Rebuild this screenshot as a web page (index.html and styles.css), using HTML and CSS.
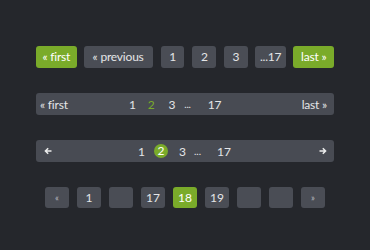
FILE: index.html
```html
<!DOCTYPE html>
<html lang="en">
<head>
    <meta charset="UTF-8">
    <meta name="viewport" content="width=device-width, initial-scale=1.0">
    <title>Pagination</title>
    <link rel="stylesheet" href="styles.css">
</head>
<body>
    <div class="container">
        <!-- Buttons pagination -->
        <nav class="pager pager-buttons">
            <a href="#" class="btn btn-green btn-first">&laquo; first</a>
            <a href="#" class="btn btn-prev">&laquo; previous</a>
            <a href="#" class="btn btn-num">1</a>
            <a href="#" class="btn btn-num">2</a>
            <a href="#" class="btn btn-num">3</a>
            <a href="#" class="btn btn-dots">...17</a>
            <a href="#" class="btn btn-green btn-last">last &raquo;</a>
        </nav>

        <!-- Bar pagination -->
        <nav class="bar bar-text">
            <a href="#" class="bar-start">&laquo; first</a>
            <div class="bar-pages">
                <a href="#">1</a>
                <a href="#" class="current-text">2</a>
                <a href="#" class="third">3</a>
                <span class="dots">...</span>
                <a href="#" class="far">17</a>
            </div>
            <a href="#" class="bar-end">last &raquo;</a>
        </nav>

        <!-- Bar with arrows -->
        <nav class="bar bar-arrows">
            <a href="#" class="bar-start arrow">
                <svg width="8" height="8" viewBox="0 0 8 8"><path d="M7.5 4H1.5M4.2 1.2L1.4 4L4.2 6.8" fill="none" stroke="#eceded" stroke-width="1.5"/></svg>
            </a>
            <div class="bar-pages">
                <a href="#">1</a>
                <a href="#" class="current-dot">2</a>
                <a href="#">3</a>
                <span class="dots">...</span>
                <a href="#" class="far">17</a>
            </div>
            <a href="#" class="bar-end arrow">
                <svg width="8" height="8" viewBox="0 0 8 8"><path d="M0.5 4H6.5M3.8 1.2L6.6 4L3.8 6.8" fill="none" stroke="#eceded" stroke-width="1.5"/></svg>
            </a>
        </nav>

        <!-- Square pagination -->
        <nav class="pager pager-squares">
            <a href="#" class="sq sq-arrow">&laquo;</a>
            <a href="#" class="sq">1</a>
            <a href="#" class="sq"></a>
            <a href="#" class="sq">17</a>
            <a href="#" class="sq sq-active">18</a>
            <a href="#" class="sq">19</a>
            <a href="#" class="sq"></a>
            <a href="#" class="sq"></a>
            <a href="#" class="sq sq-arrow">&raquo;</a>
        </nav>
    </div>
</body>
</html>
```

FILE: styles.css
```css
body {
    margin: 0;
    padding: 0;
    background-color: #25272c;
    font-family: Lato, "Open Sans", Arial, sans-serif;
    font-size: 12px;
    color: #e4e5e7;
}
a {
    color: inherit;
    text-decoration: none;
}
.container {
    width: 298px;
    margin: 0 auto;
    padding-top: 46px;
}
.pager {
    display: flex;
    justify-content: center;
}
.pager-buttons {
    gap: 7px;
}
.btn {
    height: 22px;
    line-height: 22px;
    border-radius: 3px;
    background-color: #4a4d55;
    text-align: center;
    letter-spacing: -0.2px;
}
.btn-green {
    background-color: #7aab2a;
    color: #fff;
    width: 41px;
}
.btn-prev {
    width: 70px;
}
.btn-num {
    width: 24px;
    margin-left: 1px;
}
.btn-dots {
    width: 32px;
}
.bar {
    display: flex;
    align-items: center;
    height: 22px;
    margin-top: 25px;
    border-radius: 3px;
    background-color: #484b53;
}
.bar-start {
    flex: none;
}
.bar-end {
    margin-left: auto;
}
.bar-pages {
    display: flex;
    align-items: center;
}
.bar-text {
    padding: 0 7px 0 4px;
    letter-spacing: -0.2px;
}
.bar-text .bar-start {
    width: 89px;
}
.bar-text .bar-pages {
    gap: 12px;
}
.bar-text .third {
    margin-left: 2px;
}
.bar-text .dots {
    margin-left: -3px;
}
.bar-text .far {
    margin-left: 5px;
}
.current-text {
    color: #7aab2a;
}
.dots {
    font-size: 10px;
}
.bar-arrows {
    padding: 0 7px 0 8px;
}
.bar-arrows .bar-start {
    width: 94px;
}
.bar-arrows .bar-pages {
    gap: 9px;
}
.bar-arrows .bar-pages .current-dot {
    margin-right: 2px;
}
.bar-arrows .dots {
    margin-left: -1px;
}
.bar-arrows .far {
    margin-left: 7px;
}
.arrow {
    display: flex;
}
.current-dot {
    display: inline-block;
    width: 14px;
    height: 14px;
    line-height: 14px;
    border-radius: 50%;
    text-align: center;
    background-color: #7aab2a;
    color: #fff;
}
.pager-squares {
    gap: 8px;
    margin-top: 25px;
}
.sq {
    width: 24px;
    height: 21px;
    line-height: 21px;
    border-radius: 3px;
    background-color: #4a4d55;
    text-align: center;
}
.sq-active {
    background-color: #7aab2a;
    color: #fff;
}
.sq-arrow {
    font-size: 9px;
    color: #b8bac0;
}
```
